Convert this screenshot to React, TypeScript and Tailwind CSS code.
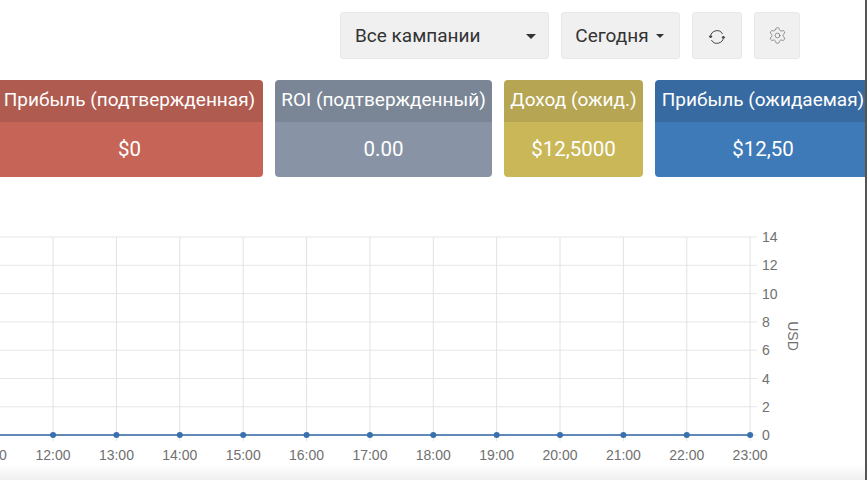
import { Settings } from "lucide-react"

const cards = [
  { title: "Прибыль (подтвержденная)", value: "$0", head: "bg-[#b05b50]", body: "bg-[#c66557]", width: "w-[267px] ml-[-4px]" },
  { title: "ROI (подтвержденный)", value: "0.00", head: "bg-[#7a8596]", body: "bg-[#8894a6]", width: "w-[217px]" },
  { title: "Доход (ожид.)", value: "$12,5000", head: "bg-[#b6a552]", body: "bg-[#c9b758]", width: "w-[139px]" },
  { title: "Прибыль (ожидаемая)", value: "$12,50", head: "bg-[#386aa2]", body: "bg-[#3e79b8]", width: "w-[216px]" },
]

const hours = ["11:00", "12:00", "13:00", "14:00", "15:00", "16:00", "17:00", "18:00", "19:00", "20:00", "21:00", "22:00", "23:00"]
const ticks = [14, 12, 10, 8, 6, 4, 2, 0]

// the svg starts at y=225 on the page
const hourX = (i: number) => -10.3 + i * 63.37
const tickY = (i: number) => 12 + i * 28.3

function Chart() {
  const zero = tickY(7)
  return (
    <svg width="867" height="255" viewBox="0 0 867 255" className="block" fontFamily="'Liberation Sans', sans-serif">
      {ticks.map((t, i) => (
        <g key={t}>
          <line x1="0" x2="757" y1={tickY(i)} y2={tickY(i)} stroke="#e6e6e6" strokeWidth="1" />
          <text x="762" y={tickY(i) + 5} fontSize="14" fill="#707070">{t}</text>
        </g>
      ))}
      {hours.map((h, i) => (
        <g key={h}>
          <line x1={hourX(i)} x2={hourX(i)} y1="12" y2={zero + 6} stroke="#e2e2e2" strokeWidth="1" />
          <text x={hourX(i)} y="235" fontSize="14" fill="#707070" textAnchor="middle">{h}</text>
        </g>
      ))}
      <line x1="0" x2={hourX(12)} y1={zero} y2={zero} stroke="#6189b8" strokeWidth="2" />
      {hours.map((h, i) => (
        <circle key={h} cx={hourX(i)} cy={zero} r="3" fill="#3a70ae" />
      ))}
      <text x="0" y="0" fontSize="14" fill="#707070" textAnchor="middle" transform="translate(788 111) rotate(90)">USD</text>
    </svg>
  )
}

function RefreshIcon() {
  return (
    <svg width="18" height="18" viewBox="0 0 18 18" fill="none" stroke="#444" strokeWidth="1">
      <path d="M2.6 9a6.4 6.4 0 0 1 12-3" />
      <path d="M15.4 9a6.4 6.4 0 0 1-12 3" />
      <path d="M1.2 8.2h2.8L2.6 10z" fill="#444" />
      <path d="M14 9.8h2.8L15.4 8z" fill="#444" />
    </svg>
  )
}

export default function App() {
  return (
    <div className="relative w-[867px] h-[480px] overflow-hidden bg-white font-['Roboto',sans-serif]">
      <div className="flex justify-end gap-3 pt-3 pr-[67px]">
        <button className="flex h-[47px] w-[209px] items-center justify-between rounded-[3px] border border-[#e8e8e8] bg-[#f0f0f0] pl-[14px] pr-[12px] pt-[1px] text-[19px] text-[#333]">
          Все кампании
          <span className="border-x-[5px] border-t-[5px] border-x-transparent border-t-[#333]" />
        </button>
        <button className="flex h-[47px] w-[119px] items-center justify-center gap-[7px] rounded-[3px] border border-[#e8e8e8] bg-[#f0f0f0] pt-[1px] pr-[2px] text-[19px] text-[#333]">
          Сегодня
          <span className="border-x-[4px] border-t-[4px] border-x-transparent border-t-[#333]" />
        </button>
        <button className="flex h-[47px] w-[50px] items-center justify-center rounded-[3px] border border-[#e8e8e8] bg-[#f0f0f0] pt-[3px]">
          <RefreshIcon />
        </button>
        <button className="flex h-[47px] w-[46px] items-center justify-center rounded-[3px] border border-[#e8e8e8] bg-[#f0f0f0]">
          <Settings size={19} strokeWidth={1} color="#777" />
        </button>
      </div>

      <div className="mt-[21px] flex gap-3 [&>*]:shrink-0">
        {cards.map((c) => (
          <div key={c.title} className={`${c.width} overflow-hidden rounded-[4px] text-center text-white`}>
            <div className={`${c.head} flex h-[42px] items-center justify-center whitespace-nowrap pb-[1px] text-[19px]`}>{c.title}</div>
            <div className={`${c.body} flex h-[55px] items-center justify-center text-[20.5px]`}>{c.value}</div>
          </div>
        ))}
      </div>

      <div className="mt-[48px]">
        <Chart />
      </div>

      <div className="absolute inset-x-0 bottom-0 h-[16px] bg-gradient-to-b from-transparent to-[#f0f0f0]" />
      <div className="absolute inset-y-0 right-0 w-[2px] bg-[#555]" />
    </div>
  )
}
